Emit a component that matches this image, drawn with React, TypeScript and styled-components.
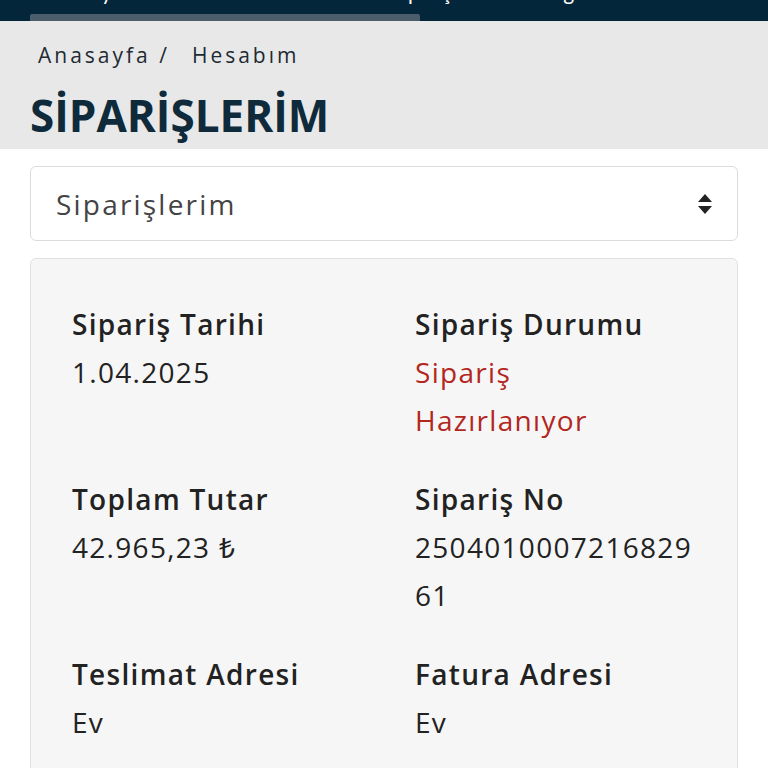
import styled, { createGlobalStyle } from 'styled-components';

const GlobalStyle = createGlobalStyle`
  body {
    margin: 0;
    background: #ffffff;
    font-family: "Open Sans", "Noto Sans", sans-serif;
    color: #222222;
  }
`;

const orderFields = [
  { label: 'Sipariş Tarihi', value: '1.04.2025' },
  { label: 'Sipariş Durumu', value: 'Sipariş Hazırlanıyor', status: true },
  { label: 'Toplam Tutar', value: '42.965,23 ₺' },
  { label: 'Sipariş No', value: '250401000721682961', code: true },
  { label: 'Teslimat Adresi', value: 'Ev' },
  { label: 'Fatura Adresi', value: 'Ev' },
];

const App = () => {
  return (
    <>
      <GlobalStyle />
      <TopBar>
        <TabRow>
          <TabText $left={86}>Üyelik</TabText>
          <TabText $left={248}>Sipariş</TabText>
          <TabText $left={88}>Bilgi</TabText>
        </TabRow>
        <ScrollThumb />
      </TopBar>

      <PageHead>
        <Breadcrumb>
          <span>Anasayfa /</span>
          <span>Hesabım</span>
        </Breadcrumb>
        <PageTitle>SİPARİŞLERİM</PageTitle>
      </PageHead>

      <Content>
        <SelectBox>
          <span>Siparişlerim</span>
          <svg width="16" height="22" viewBox="0 0 16 22">
            <path d="M8 1 L15 9 L1 9 Z" fill="#222" />
            <path d="M1 13 L15 13 L8 21 Z" fill="#222" />
          </svg>
        </SelectBox>

        <OrderCard>
          {orderFields.map((f) => (
            <Field key={f.label}>
              <FieldLabel>{f.label}</FieldLabel>
              <FieldValue $status={f.status} $code={f.code}>
                {f.value}
              </FieldValue>
            </Field>
          ))}
        </OrderCard>
      </Content>
    </>
  );
};

export default App;

const TopBar = styled.div`
  height: 21px;
  background: #04263a;
  overflow: hidden;
  display: flex;
  flex-direction: column;
  justify-content: space-between;
`;

const TabRow = styled.div`
  display: flex;
  margin-top: -21px;
  height: 26px;
`;

const TabText = styled.span<{ $left: number }>`
  margin-left: ${(p) => p.$left}px;
  font-family: Lato, sans-serif;
  font-size: 21px;
  line-height: 26px;
  color: #ffffff;
`;

const ScrollThumb = styled.div`
  margin-left: 30px;
  width: 390px;
  height: 7px;
  background: #4b5d6a;
  border-radius: 2px 2px 0 0;
`;

const PageHead = styled.div`
  background: #e8e8e8;
  padding: 19px 30px 8px;
`;

const Breadcrumb = styled.div`
  display: flex;
  gap: 22px;
  padding-left: 8px;
  font-size: 21px;
  line-height: 30px;
  letter-spacing: 3px;
  color: #1d2a33;
`;

const PageTitle = styled.h1`
  margin: 19px 0 0;
  font-size: 44px;
  line-height: 52px;
  font-weight: 700;
  color: #0e2a3b;
`;

const Content = styled.div`
  padding: 17px 30px 0;
  display: flex;
  flex-direction: column;
  gap: 17px;
`;

const SelectBox = styled.div`
  height: 75px;
  box-sizing: border-box;
  border: 1px solid #dcdcdc;
  border-radius: 6px;
  background: #ffffff;
  display: flex;
  align-items: center;
  justify-content: space-between;
  padding: 0 24px 0 25px;
  font-size: 28px;
  letter-spacing: 2.2px;
  color: #444444;
`;

const OrderCard = styled.div`
  background: #f6f6f6;
  border: 1px solid #e2e2e2;
  border-radius: 6px;
  padding: 41px 41px 40px;
  display: grid;
  grid-template-columns: 343px 1fr;
  row-gap: 31px;
`;

const Field = styled.div`
  display: flex;
  flex-direction: column;
`;

const FieldLabel = styled.div`
  font-size: 28px;
  line-height: 48px;
  font-weight: 600;
  letter-spacing: 1.3px;
  color: #222222;
`;

const FieldValue = styled.div<{ $status?: boolean; $code?: boolean }>`
  font-size: 28px;
  line-height: 48px;
  letter-spacing: 1.3px;
  color: ${(p) => (p.$status ? '#b3261e' : '#222222')};
  word-break: ${(p) => (p.$code ? 'break-all' : 'normal')};
  max-width: ${(p) => (p.$status ? '220px' : p.$code ? '282px' : 'none')};
`;
